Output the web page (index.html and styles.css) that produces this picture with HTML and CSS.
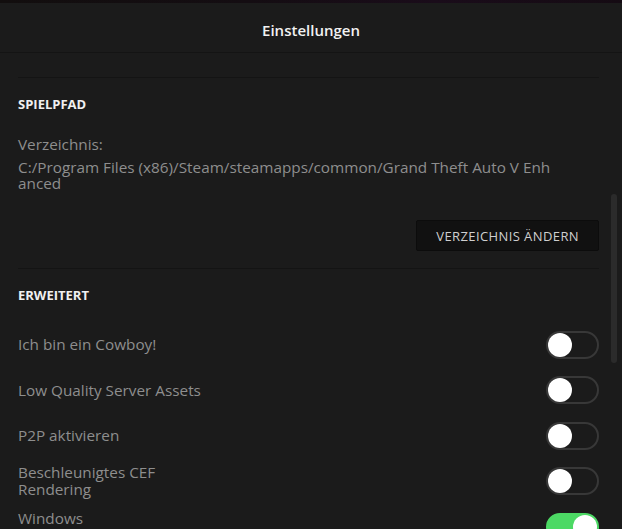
FILE: index.html
```html
<!DOCTYPE html>
<html>

<head>
    <meta charset="utf-8">
    <link rel="stylesheet" href="styles.css">
</head>

<body>
    <div class="strip"></div>
    <div class="modal">
        <div class="header">
            <h1>Einstellungen</h1>
        </div>
        <div class="content">
            <div class="section">
                <h2>Spielpfad</h2>
                <p class="label">Verzeichnis:</p>
                <p class="path">C:/Program Files (x86)/Steam/steamapps/common/Grand Theft Auto V Enhanced</p>
                <div class="actions">
                    <button class="btn">Verzeichnis ändern</button>
                </div>
            </div>
            <div class="section">
                <h2>Erweitert</h2>
                <div class="row">
                    <span class="name">Ich bin ein Cowboy!</span>
                    <span class="toggle"></span>
                </div>
                <div class="row">
                    <span class="name">Low Quality Server Assets</span>
                    <span class="toggle"></span>
                </div>
                <div class="row">
                    <span class="name">P2P aktivieren</span>
                    <span class="toggle"></span>
                </div>
                <div class="row">
                    <span class="name">Beschleunigtes CEF Rendering</span>
                    <span class="toggle"></span>
                </div>
                <div class="row">
                    <span class="name">Windows Benachrichtigungen</span>
                    <span class="toggle on"></span>
                </div>
            </div>
            <!-- scrollbalken liegt über dem inhalt -->
            <div class="scrollbar"></div>
        </div>
    </div>
</body>

</html>
```

FILE: styles.css
```css
* {
    padding: 0;
    margin: 0;
    box-sizing: border-box;
}

body {
    background: #1b1b1b;
    font-family: "Open Sans", "Noto Sans", sans-serif;
    height: 529px;
    overflow: hidden;
}

.strip {
    height: 3px;
    background: linear-gradient(90deg, #120e0e 0%, #140d12 40%, #1a0c1a 70%, #150b13 100%);
}

.header {
    height: 50px;
    display: flex;
    align-items: center;
    justify-content: center;
    border-bottom: 1px solid #141414;
}

.header h1 {
    font-size: 15px;
    font-weight: 600;
    color: #f2f2f2;
    padding-top: 4px;
}

.content {
    position: relative;
    padding: 24px 23px 0 18px;
}

.section {
    border-top: 1px solid #141414;
    padding: 18px 0 17px;
}

.section h2 {
    font-size: 13px;
    font-weight: 700;
    line-height: 16px;
    color: #f0f0f0;
    text-transform: uppercase;
}

.label {
    margin-top: 22px;
    font-size: 15.3px;
    line-height: 20px;
    color: #8e8e8e;
}

.path {
    margin-top: 5px;
    font-size: 15.3px;
    line-height: 16px;
    color: #8e8e8e;
    word-break: break-all;
    width: 535px;
}

.actions {
    display: flex;
    justify-content: flex-end;
    margin-top: 29px;
}

.btn {
    height: 31px;
    padding: 0 19px;
    background: #111111;
    border: 1px solid #0c0c0c;
    border-radius: 2px;
    color: #cfcfcf;
    font-family: inherit;
    font-size: 13px;
    letter-spacing: 0.4px;
    text-transform: uppercase;
}

.row {
    display: flex;
    align-items: center;
    justify-content: space-between;
    height: 45.5px;
}

.section h2 + .row {
    margin-top: 19px;
}

.name {
    max-width: 200px;
    font-size: 15.3px;
    line-height: 17px;
    color: #8e8e8e;
}

.toggle {
    position: relative;
    width: 53px;
    height: 28px;
    border: 2px solid #383838;
    border-radius: 14px;
}

.toggle::after {
    content: "";
    position: absolute;
    left: 0;
    top: 0;
    width: 24px;
    height: 24px;
    border-radius: 50%;
    background: #fff;
}

.toggle.on {
    background: #4cd964;
    border-color: #4cd964;
}

.toggle.on::after {
    left: auto;
    right: 0;
}

.scrollbar {
    position: absolute;
    right: 5px;
    top: 141px;
    width: 6px;
    height: 169px;
    border-radius: 3px;
    background: #2b2b2b;
}
```
